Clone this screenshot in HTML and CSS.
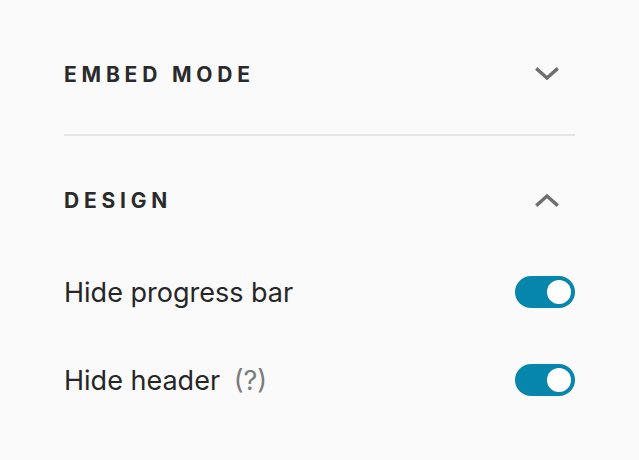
FILE: index.html
```html
<!DOCTYPE html>
<html lang="en">
<head>
<meta charset="utf-8">
<title>Embed settings</title>
<link rel="stylesheet" href="styles.css">
</head>
<body>
<div class="panel">
  <section class="section section-collapsed">
    <div class="section-header">
      <h2 class="section-title">EMBED MODE</h2>
      <svg class="chevron" width="24" height="14" viewBox="0 0 24 14"><polyline points="2.5,2.5 12,11 21.5,2.5" fill="none" stroke="#6e6e6e" stroke-width="3.4" stroke-linecap="square" stroke-linejoin="miter"/></svg>
    </div>
  </section>
  <div class="divider"></div>
  <section class="section section-open">
    <div class="section-header">
      <h2 class="section-title">DESIGN</h2>
      <svg class="chevron" width="24" height="14" viewBox="0 0 24 14"><polyline points="2.5,11.5 12,3 21.5,11.5" fill="none" stroke="#6e6e6e" stroke-width="3.4" stroke-linecap="square" stroke-linejoin="miter"/></svg>
    </div>
    <div class="option-row first">
      <span class="option-label">Hide progress bar</span>
      <span class="toggle on"><span class="knob"></span></span>
    </div>
    <div class="option-row">
      <span class="option-label">Hide header <span class="hint">(?)</span></span>
      <span class="toggle on"><span class="knob"></span></span>
    </div>
  </section>
</div>
</body>
</html>
```
FILE: styles.css
```css
html, body {
  margin: 0;
  padding: 0;
  background: #fafafa;
}
body {
  font-family: Inter, "Liberation Sans", Arial, sans-serif;
  color: #262627;
}
.panel {
  padding: 50px 64px 0 64px;
}
.section-header {
  display: flex;
  align-items: center;
  justify-content: space-between;
  height: 48px;
}
.section-title {
  margin: 0;
  font-size: 21px;
  font-weight: 700;
  letter-spacing: 4.8px;
  color: #2a2a2b;
}
.chevron {
  display: block;
  margin-right: 16px;
}
.section-collapsed {
  padding-bottom: 36px;
}
.divider {
  height: 2px;
  background: #e5e5e5;
}
.section-open {
  padding-top: 40px;
}
.option-row {
  display: flex;
  align-items: center;
  justify-content: space-between;
  height: 32px;
  margin-top: 56px;
}
.option-row.first {
  margin-top: 52px;
}
.option-label {
  font-size: 27px;
  font-weight: 400;
  color: #262627;
}
.hint {
  color: #7b7b7b;
  margin-left: 6px;
}
.toggle {
  display: flex;
  align-items: center;
  justify-content: flex-end;
  box-sizing: border-box;
  width: 60px;
  height: 32px;
  padding: 4px;
  border-radius: 16px;
  background: #0786ad;
}
.knob {
  width: 24px;
  height: 24px;
  border-radius: 50%;
  background: #ffffff;
}
```
